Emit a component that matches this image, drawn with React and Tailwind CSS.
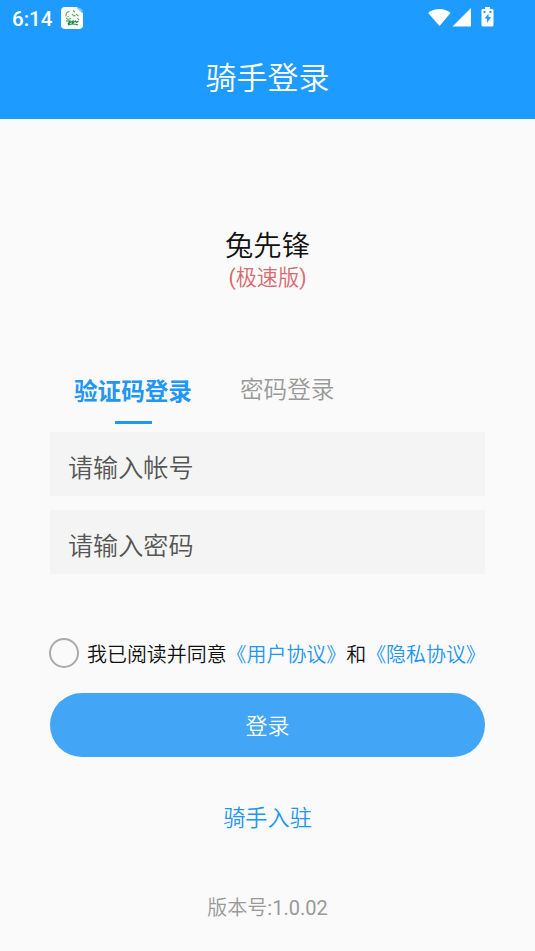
function StatusIcons() {
  return (
    <svg className="ml-auto h-[22px] w-[68px]" viewBox="0 0 68 22" fill="#fff">
      <path d="M.2 6C6 .8 17 .8 22.500 6L11.500 19Z" />
      <path d="M24.500 19.500L43 1V19.500Z" />
      <path fillRule="evenodd" d="M57 0h5v2H64q1.500 0 1.500 1v15q0 1.500-1.500 1.500h-9q-1.500 0-1.500-1.500V3q0-1 1.500-1h2ZM60.500 6.500l-4 5h2.500v4.500l4-6h-2.500ZM55.500 4v2h2V4ZM61.500 4v2h2V4Z" />
    </svg>
  );
}

function AppBadge() {
  return (
    <svg className="ml-[8px] h-[22px] w-[22px]" viewBox="0 0 22 22" fill="none">
      <path d="M4 0h12l6 6v12q0 4-4 4H4q-4 0-4-4V4q0-4 4-4Z" fill="#fff" />
      <path d="M5 9.500Q4.500 5 8.500 4.500M12 3.500L14 5M15 7l2.500 2M11 7l1.500 2 2-.5M16.500 11l1.500 2M5 11l2 1.500 3-1M7 9v1" stroke="#4caf50" strokeWidth="1.100" />
      <path d="M5 14h4l-2 3 3-2 2-1-.5 2 3-2 1 1.500 2-1.500M7 18q5-2 10 0" stroke="#178344" strokeWidth="1.200" />
      <path d="M16 1l5 5M18.500 1l3 3" stroke="#a9dbff" strokeWidth="1" />
    </svg>
  );
}

export default function App() {
  return (
    <div className="flex h-[951px] w-[535px] flex-col overflow-hidden bg-[#fafafa] font-['Roboto','Noto_Sans_CJK_SC',sans-serif] font-[350] whitespace-nowrap">
      <header className="h-[119px] shrink-0 bg-[#1e9bff] text-white">
        <div className="flex h-[36px] items-center pr-[39px] pl-3">
          <span className="w-[41px] pt-[2px] text-[20.5px] font-medium">6:14</span>
          <AppBadge />
          <StatusIcons />
        </div>
        <h1 className="mt-[20px] text-center text-[31px] leading-[46px] font-[350]">骑手登录</h1>
      </header>
      <main className="flex flex-col px-[50px]">
        <h2 className="mt-[107px] text-center text-[28.3px] leading-[42px] font-[350] text-[#111]">兔先锋</h2>
        <p className="text-center text-[21.2px] leading-[20px] text-[#d56b70]"><span className="font-normal">(</span>极速版<span className="font-normal">)</span></p>
        <div className="mt-[84px] flex pl-[24px] text-[23.6px] leading-[36px]">
          <b className="-mb-px pt-[2px] font-bold text-[#2196f3]">验证码登录</b>
          <span className="ml-[48px] text-[#999]">密码登录</span>
        </div>
        <div className="mt-[12px] ml-[65px] h-[3px] w-[37px] bg-[#2196f3]" />
        <div className="mt-[8px] flex h-[64px] items-center bg-[#f4f4f4] pt-[10px] pl-[18px] text-[25.1px] text-[#555]">请输入帐号</div>
        <div className="mt-[14px] flex h-[64px] items-center bg-[#f4f4f4] pt-[10px] pl-[18px] text-[25.1px] text-[#555]">请输入密码</div>
        <div className="-ml-px mt-[64px] flex h-[30px] items-center text-[19.95px] text-[#111]">
          <span className="mr-[8px] h-[30px] w-[30px] shrink-0 rounded-full border-2 border-[#aaa]" />
          <p className="pt-[6px]">
            我已阅读并同意<span className="text-[#2196f3]">《用户协议》</span>和<span className="text-[#2196f3]">《隐私协议》</span>
          </p>
        </div>
        <button className="mt-[25px] h-[64px] rounded-full bg-[#42a5f5] pt-[3px] text-[22px] font-[350] text-white">登录</button>
        <a className="mt-[44px] text-center text-[22.2px] leading-[34px] text-[#2196f3]">骑手入驻</a>
        <p className="mt-[58px] text-center text-[20px] leading-[30px] text-[#999]">版本号<span className="font-normal">:1.0.02</span></p>
      </main>
    </div>
  );
}
